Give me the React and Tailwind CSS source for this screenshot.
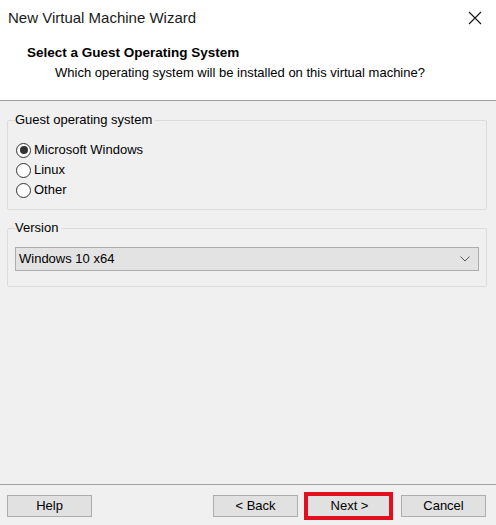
import React from "react";

function Radio({ checked, label }) {
  return (
    <label className="flex items-center h-[20px] gap-[3px]">
      <span className="w-[15px] h-[15px] rounded-full border border-[#333333] bg-white flex items-center justify-center">
        {checked && <span className="w-[8px] h-[8px] rounded-full bg-[#333333]" />}
      </span>
      <span>{label}</span>
    </label>
  );
}

function Btn({ children }) {
  return (
    <button className="w-[85px] h-[22px] bg-[#e1e1e1] border border-[#adadad] text-[13px] text-black flex items-center justify-center">
      {children}
    </button>
  );
}

export default function App() {
  return (
    <div
      className="w-[496px] h-[525px] bg-[#f0f0f0] flex flex-col text-black text-[13px] leading-[16px]"
      style={{ fontFamily: '"Liberation Sans", Arial, sans-serif' }}
    >
      <div className="bg-white h-[101px] border-b border-[#a0a0a0] flex flex-col">
        <div className="h-[36px] flex items-center justify-between pl-[8px] pr-[14px]">
          <span className="text-[15px] text-[#1a1a1a]">New Virtual Machine Wizard</span>
          <svg width="14" height="14" viewBox="0 0 14 14">
            <path d="M1 1 L13 13 M13 1 L1 13" stroke="#111" strokeWidth="1.1" fill="none" />
          </svg>
        </div>
        <div className="mt-[7px] pl-[27px] font-bold text-[13.5px] leading-[20px]">
          Select a Guest Operating System
        </div>
        <div className="pl-[55px] text-[13px] leading-[20px]">
          Which operating system will be installed on this virtual machine?
        </div>
      </div>

      <fieldset className="mt-[11px] mx-[7px] w-[480px] border border-[#dcdcdc] rounded-[2px] pl-[8px] pt-[12px] pb-[9px]">
        <legend className="-ml-[1px] leading-[16px] pr-[3px]">Guest operating system</legend>
        <Radio checked label="Microsoft Windows" />
        <Radio label="Linux" />
        <Radio label="Other" />
      </fieldset>

      <fieldset className="mt-[10px] mx-[7px] w-[480px] border border-[#dcdcdc] rounded-[2px] px-[7px] pt-[11px] pb-[15px]">
        <legend className="leading-[16px] pr-[3px]">Version</legend>
        <div className="h-[24px] bg-[#e3e3e3] border border-[#adadad] flex items-center justify-between pl-[3px] pr-[8px]">
          <span>Windows 10 x64</span>
          <svg width="10" height="6" viewBox="0 0 10 6">
            <path d="M0.5 0.5 L5 5 L9.5 0.5" stroke="#555" strokeWidth="1" fill="none" />
          </svg>
        </div>
      </fieldset>

      <div className="flex-1" />

      <div className="border-t border-[#a0a0a0] h-[41px] flex items-start pt-[10px] px-[7px]">
        <Btn>Help</Btn>
        <div className="flex-1" />
        <div className="flex gap-[9px] mr-[3px]">
          <Btn>&lt; Back</Btn>
          <div className="relative">
            <Btn>Next &gt;</Btn>
            <div className="absolute -left-[3px] -right-[1px] -top-[3px] -bottom-[3px] border-[4px] border-[#e2101f] pointer-events-none" />
          </div>
          <Btn>Cancel</Btn>
        </div>
      </div>
    </div>
  );
}
